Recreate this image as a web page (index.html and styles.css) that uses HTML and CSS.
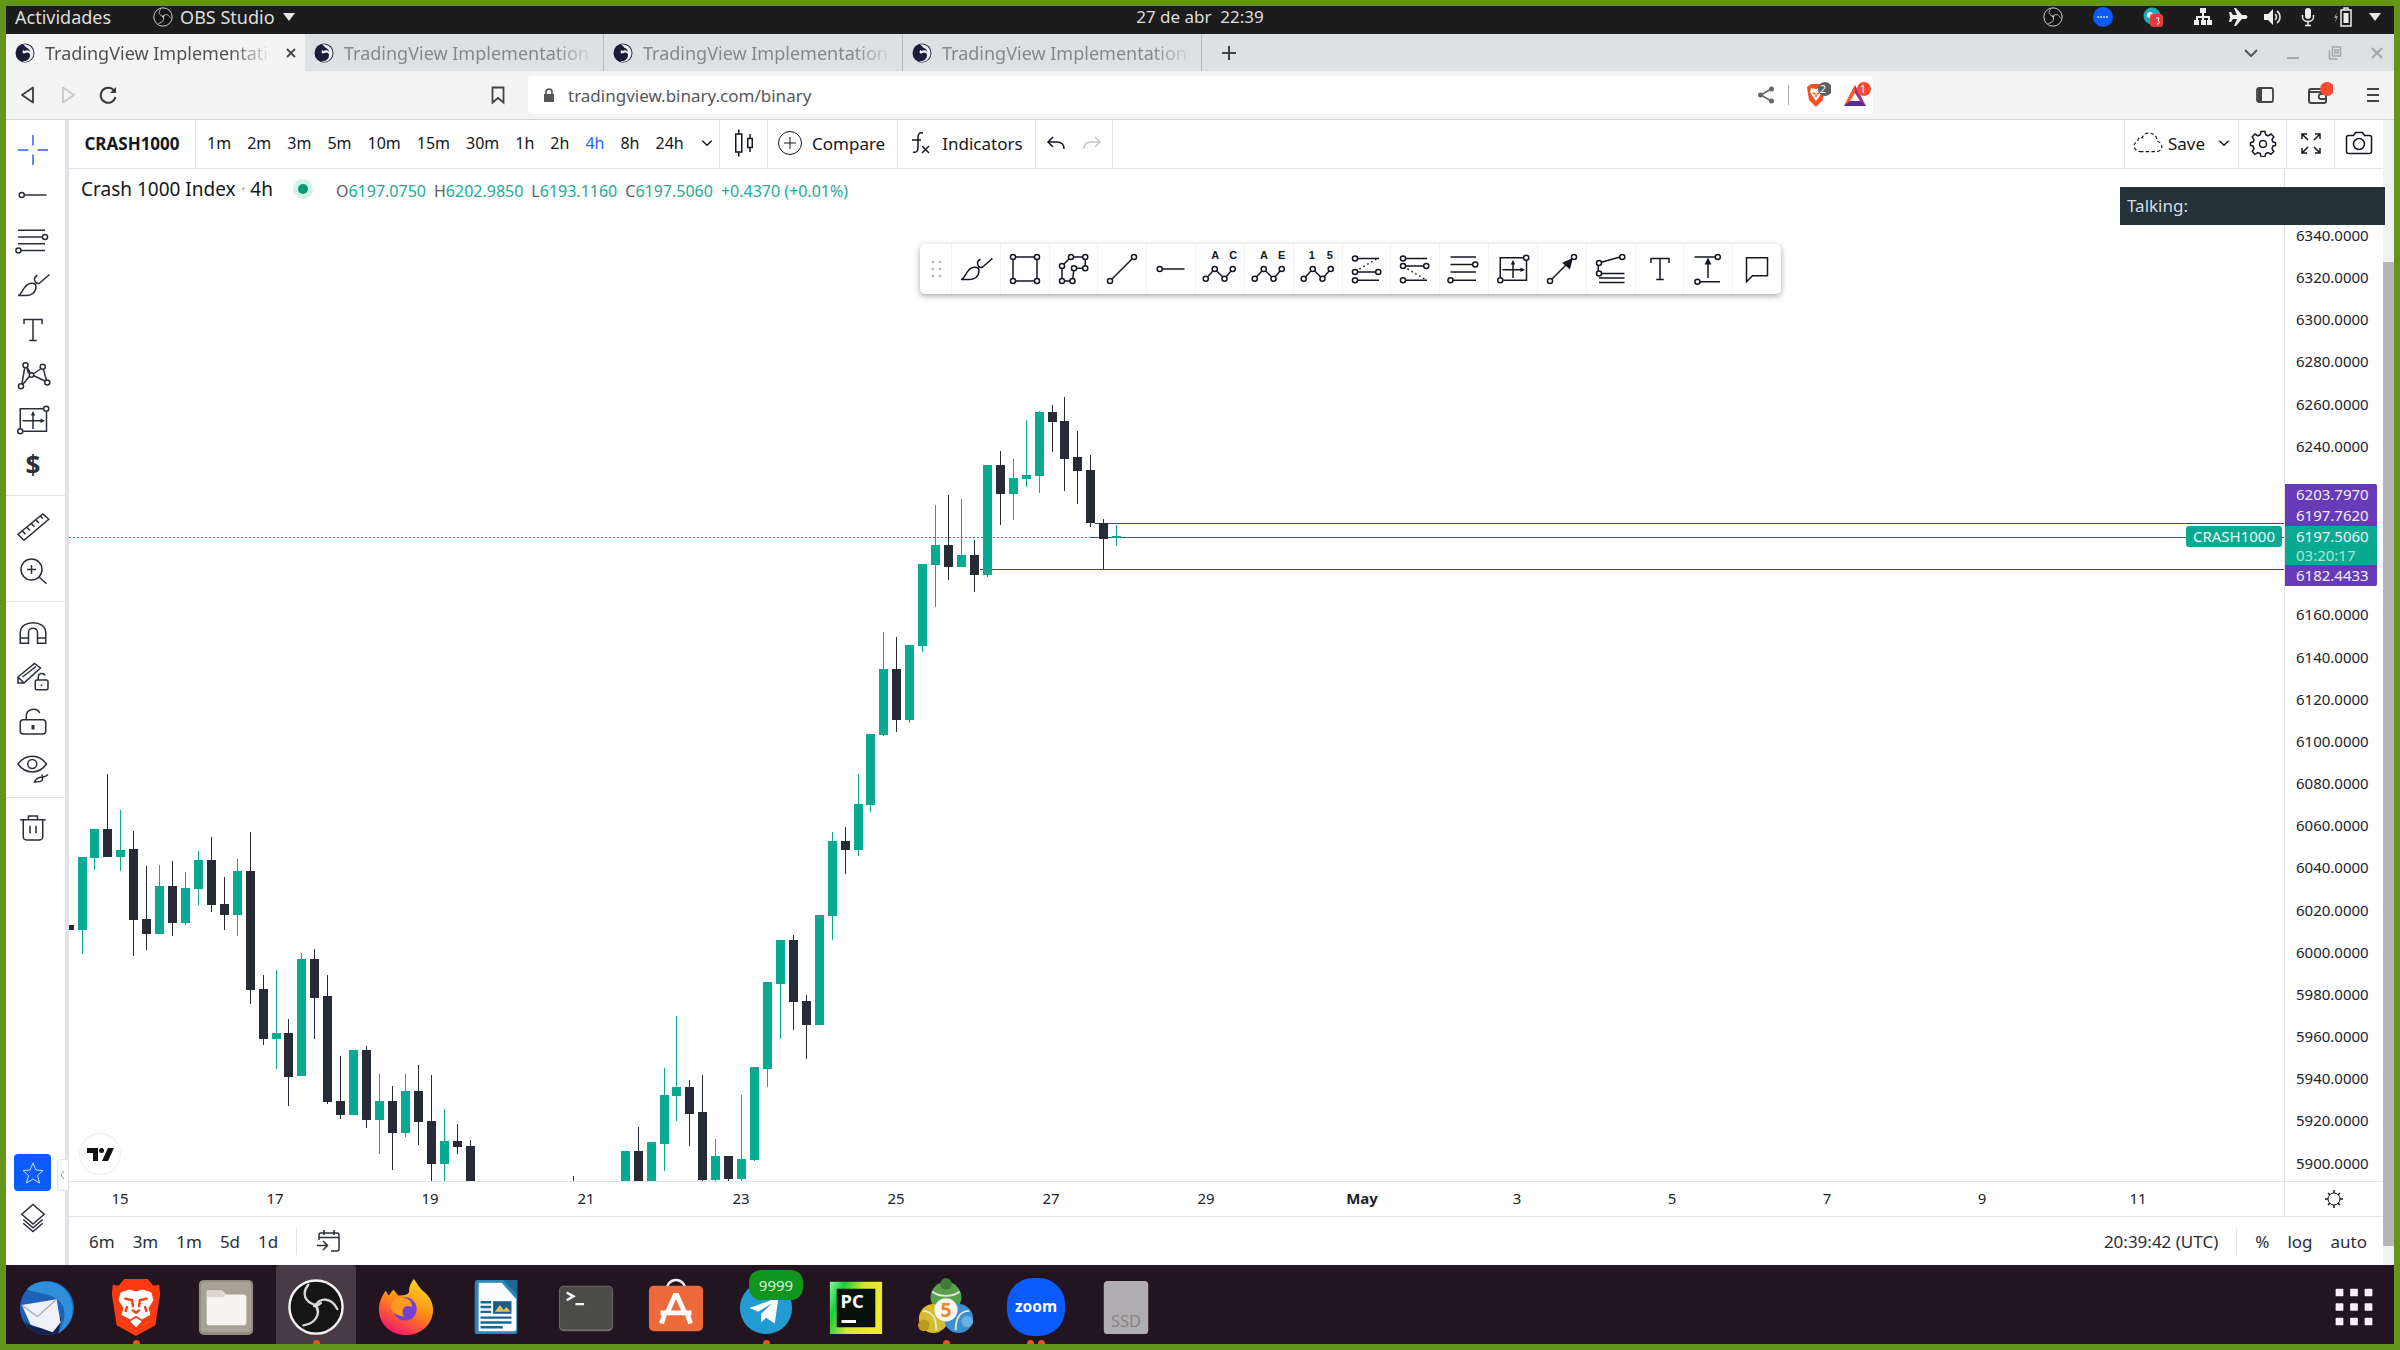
FILE: index.html
```
<!DOCTYPE html>
<html lang="es">

<head>
  <meta charset="utf-8">
  <title>TradingView Implementation</title>
  <meta name="viewport" content="width=device-width, initial-scale=1">
  <link rel="stylesheet" href="styles.css">
  <script src="chart.js" defer></script>
</head>

<body>

<!-- shared icons -->
<svg class="sprite" aria-hidden="true">
  <symbol id="i-obs" viewBox="0 0 60 60">
    <circle cx="30" cy="30" r="27.500" fill="#151515" stroke="#f4f4f4" stroke-width="2.500"/>
    <g fill="none" stroke="#d8d8dc" stroke-width="2.500" stroke-linecap="round">
      <path d="M22 7c-7 9-4 18 8 21"/>
      <path d="M30 28c4-8 16-8 22 4"/>
      <path d="M30 28c5 9 0 19-13 21"/>
      <path d="M28 29c5 0 5-2 7-3M30 27c0 4 1 5 2 7"/>
    </g>
  </symbol>
  <symbol id="i-favicon" viewBox="0 0 20 20">
    <circle cx="10" cy="10" r="9.500" fill="#1d1d3a"/>
    <path d="M8 1.500a8.800 8.800 0 1 1-1 17c5 0 8-3 8-6 0-2-1-3-3-3-1 0-2 1-3 1s-2-1-1-3c1-1 3-1 4-2-1-1-2-3-4-4z" fill="#eef0f5"/>
    <path d="M9 5c3-1 6 1 6 4-1-2-3-2-6-1z" fill="#1d1d3a"/>
  </symbol>
  <symbol id="i-chevron" viewBox="0 0 12 12"><path d="M2 4l4 4 4-4" fill="none" stroke="currentColor" stroke-width="1.200"/></symbol>
  <symbol id="i-hray" viewBox="0 0 28 28"><path d="M8.500 14H23"/><circle cx="6.500" cy="14" r="1.700"/></symbol>
  <symbol id="i-fib" viewBox="0 0 28 28"><path d="M4 7.500h18M4 12h16.500M4 16.500h18M6 21h16"/><circle cx="22" cy="12" r="1.700"/><circle cx="4.300" cy="21" r="1.700"/></symbol>
  <symbol id="i-brush" viewBox="0 0 28 28"><path d="M4 21c2 0 3-4 5-6 2-3 7-3 7 0 0 4-3 6-6 6zM15 10c0 2 1 3 3 3l7-6M15 10c0-1 1-2 2-2.500"/></symbol>
  <symbol id="i-text" viewBox="0 0 28 28"><path d="M8 10V7h12v3M14 7v14M11.500 21h5"/></symbol>
  <symbol id="i-proj" viewBox="0 0 28 28"><path d="M5.500 20V6.500h15.500M23 8.500V21.500H7.500M14 9v11M7 14.500h14"/><path d="M14 8l-1.500 3h3zM22 14.500l-3-1.500v3z" fill="currentColor" stroke="none"/><circle cx="22.800" cy="6.500" r="1.700"/><circle cx="5.500" cy="21.500" r="1.700"/></symbol>
  <symbol id="i-wave" viewBox="0 0 28 28"><path d="M4.500 20.500L10.500 14l6.500 6.500 5.500-6.500"/><circle cx="4.500" cy="20.500" r="1.700"/><circle cx="10.500" cy="14" r="1.700"/><circle cx="17" cy="20.500" r="1.700"/><circle cx="22.500" cy="14" r="1.700"/></symbol>
</svg>

<div class="desktop">

  <header class="topbar">
    <button class="topbar__item" type="button">Actividades</button>
    <button class="topbar__item topbar__app" type="button">
      <svg class="ico20"><use href="#i-obs"/></svg>
      OBS Studio
      <svg class="ico14" viewBox="0 0 14 14"><path d="M1 3h12l-6 8z" fill="#e6e6e6"/></svg>
    </button>
    <time class="topbar__clock">27 de abr&nbsp; 22:39</time>
    <div class="tray">
      <svg class="ico20 tray__wide" viewBox="0 0 20 20"><use href="#i-obs"/></svg>
      <svg class="ico20 tray__wide" viewBox="0 0 20 20"><circle cx="10" cy="10" r="10" fill="#0b5cff"/><path d="M4 10h12" stroke="#9fc0ff" stroke-width="2" stroke-dasharray="2 1"/></svg>
      <svg class="ico20 tray__wide" viewBox="0 0 20 20"><circle cx="9" cy="9" r="8.500" fill="#2ba5b8"/><circle cx="7" cy="8" r="3" fill="#d7f0f2"/><rect x="7" y="7" width="13" height="13" rx="3" fill="#e23b3b"/><path d="M13 11h3l-1 3c2 0 2 3-1 3" fill="none" stroke="#fff"/></svg>
      <svg class="ico20" viewBox="0 0 20 20"><path d="M7 1h6v5H7zM1 13h5v5H1zM8 13h5v5H8zM14 13h5v5h-5zM9 6h2v7H9zM3 9h14v4h-2v-2H5v2H3z" fill="#eee"/></svg>
      <svg class="ico20" viewBox="0 0 20 20"><path d="M1 5h2l2 3h4L6 1h2l6 7h4c2 1 2 3 0 4h-4l-6 7H6l3-7H5l-2 3H1l1-5z" fill="#eee"/></svg>
      <svg class="ico20" viewBox="0 0 20 20"><path d="M1 7h4l5-5v16l-5-5H1z" fill="#eee"/><path d="M12 7c2 2 2 4 0 6M14 4c4 3 4 9 0 12" fill="none" stroke="#ddd" stroke-width="1.600"/></svg>
      <svg class="ico20" viewBox="0 0 20 20"><rect x="7" y="1" width="6" height="11" rx="3" fill="#eee"/><path d="M4.500 8v2c0 6 11 6 11 0V8M10 15v3M7 18.500h6" fill="none" stroke="#eee" stroke-width="1.500"/></svg>
      <svg class="ico20" viewBox="0 0 20 20"><path d="M8 3h10v16H8zM11 1h4v2h-4z" fill="none" stroke="#eee" stroke-width="1.500"/><path d="M10.500 6h5v10h-5z" fill="#eee"/><path d="M4 5L1 11h2l-1 5 3-7H3z" fill="#999"/></svg>
      <svg class="ico14" viewBox="0 0 14 14"><path d="M1 3h12l-6 8z" fill="#e6e6e6"/></svg>
    </div>
  </header>

  <nav class="tabs" aria-label="Tabs">
    <div class="tab tab_active">
      <svg class="ico20"><use href="#i-favicon"/></svg>
      <a class="tab__title" href="#">TradingView Implementation</a>
      <button class="tab__close" type="button" aria-label="Close tab">
        <svg class="ico12" viewBox="0 0 12 12"><path d="M2 2l8 8M10 2l-8 8" stroke="#444" stroke-width="1.800"/></svg>
      </button>
    </div>
    <div class="tab"><svg class="ico20"><use href="#i-favicon"/></svg><a class="tab__title" href="#">TradingView Implementation</a></div>
    <div class="tab"><svg class="ico20"><use href="#i-favicon"/></svg><a class="tab__title" href="#">TradingView Implementation</a></div>
    <div class="tab"><svg class="ico20"><use href="#i-favicon"/></svg><a class="tab__title" href="#">TradingView Implementation</a></div>
    <button class="tabs__new" type="button" aria-label="New tab"><svg class="ico20" viewBox="0 0 20 20"><path d="M10 3v14M3 10h14" stroke="#444" stroke-width="2"/></svg></button>
    <div class="window-buttons">
      <button type="button" aria-label="Search tabs"><svg class="ico20" viewBox="0 0 20 20"><path d="M4 7l6 6 6-6" fill="none" stroke="#555" stroke-width="2"/></svg></button>
      <button type="button" aria-label="Minimize"><svg class="ico20" viewBox="0 0 20 20"><path d="M4 15h12" stroke="#a5a7a9" stroke-width="2"/></svg></button>
      <button type="button" aria-label="Restore"><svg class="ico20" viewBox="0 0 20 20"><path d="M7.500 4h8v9h-8zM4.500 7v9h8M10 7h3v3h-3z" fill="none" stroke="#a5a7a9" stroke-width="1.500"/></svg></button>
      <button type="button" aria-label="Close"><svg class="ico20" viewBox="0 0 20 20"><path d="M5 5l10 10M15 5L5 15" stroke="#a5a7a9" stroke-width="2.200"/></svg></button>
    </div>
  </nav>

  <div class="browser-bar">
    <div class="browser-bar__nav">
      <button type="button" aria-label="Back"><svg class="ico20" viewBox="0 0 20 20"><path d="M15 2.500v15L4 10z" fill="none" stroke="#3c3c3c" stroke-width="1.800" stroke-linejoin="round"/></svg></button>
      <button type="button" aria-label="Forward" disabled><svg class="ico20" viewBox="0 0 20 20"><path d="M5 2.500v15L16 10z" fill="none" stroke="#c6c6c6" stroke-width="1.600" stroke-linejoin="round"/></svg></button>
      <button type="button" aria-label="Reload"><svg class="ico20" viewBox="0 0 20 20"><path d="M16 5.500A7.500 7.500 0 1 0 17.500 12" fill="none" stroke="#3c3c3c" stroke-width="2"/><path d="M18 2v6h-6z" fill="#3c3c3c"/></svg></button>
    </div>
    <button class="browser-bar__bookmark" type="button" aria-label="Bookmark"><svg class="ico20" viewBox="0 0 20 20"><path d="M4.500 2.500h11v15L10 13l-5.500 4.500z" fill="none" stroke="#444" stroke-width="1.800"/></svg></button>
    <div class="address">
      <svg class="ico14" viewBox="0 0 14 14"><path d="M2 6h10v8H2z" fill="#555"/><path d="M4 7V4c0-4 6-4 6 0v3" fill="none" stroke="#555" stroke-width="1.700"/></svg>
      <input class="address__input" type="text" aria-label="Address" value="tradingview.binary.com/binary">
      <button type="button" aria-label="Share"><svg class="ico20" viewBox="0 0 20 20"><path d="M15 4L5 10l10 6" fill="none" stroke="#666" stroke-width="1.600"/><circle cx="15.500" cy="4" r="2.500" fill="#666"/><circle cx="4.500" cy="10" r="2.500" fill="#666"/><circle cx="15.500" cy="16" r="2.500" fill="#666"/></svg></button>
      <span class="address__line"></span>
      <button class="address__ext" type="button" aria-label="Brave Shields"><svg class="ico28" viewBox="0 0 28 28"><path d="M4 6l4-3h10l3 3-1 13-7 7-7-7z" fill="#f4511e"/><path d="M8 7l5 1 5-1 1 4-3 5-3 4-3-4-3-5z" fill="#fff"/><path d="M10 12l2 1M16 12l-2 1M13 13v3" stroke="#f4511e" stroke-width="1.500"/><circle cx="22" cy="8" r="7" fill="#5b5f66"/></svg><span class="address__count">2</span></button>
      <button class="address__ext" type="button" aria-label="Rewards"><svg class="ico28" viewBox="0 0 28 28"><path d="M12 4L1 25h22z" fill="#9c2f7e"/><path d="M12 4L1 25l7-5 4-8z" fill="#ff5a2b"/><path d="M1 25h22l-6-5H7z" fill="#5b2d90"/><path d="M12 12l-5 8h10z" fill="#fff"/><circle cx="21" cy="8" r="7" fill="#fa4b32"/></svg><span class="address__count">1</span></button>
    </div>
    <div class="browser-bar__right">
      <button type="button" aria-label="Sidebar"><svg class="ico20" viewBox="0 0 20 20"><rect x="2" y="3" width="16" height="14" rx="2" fill="none" stroke="#444" stroke-width="1.800"/><path d="M3 3h4v14H3z" fill="#444"/></svg></button>
      <button type="button" aria-label="Wallet"><svg class="ico28" viewBox="0 0 28 28"><rect x="4" y="8" width="17" height="14" rx="2" fill="none" stroke="#444" stroke-width="2"/><path d="M5 11h15M21 13h-5c-3 0-3 5 0 5h5" fill="none" stroke="#444" stroke-width="1.800"/><circle cx="22" cy="8" r="7" fill="#fa4b32"/></svg></button>
      <button type="button" aria-label="Menu"><svg class="ico20" viewBox="0 0 20 20"><path d="M4 4h12M4 10h12M4 16h12" stroke="#444" stroke-width="2"/></svg></button>
    </div>
  </div>

  <main class="page">

    <aside class="drawing-bar">
      <div class="drawing-bar__group">
        <button class="tool tool_active" type="button" aria-label="Cross"><svg class="ico42" viewBox="0 0 28 28"><path d="M14 4v7M14 17v7M4 14h7M17 14h7"/></svg></button>
        <button class="tool" type="button" aria-label="Horizontal ray"><svg class="ico42"><use href="#i-hray"/></svg></button>
        <button class="tool" type="button" aria-label="Fib retracement"><svg class="ico42"><use href="#i-fib"/></svg></button>
        <button class="tool" type="button" aria-label="Brush"><svg class="ico42"><use href="#i-brush"/></svg></button>
        <button class="tool" type="button" aria-label="Text"><svg class="ico42"><use href="#i-text"/></svg></button>
        <button class="tool" type="button" aria-label="XABCD pattern"><svg class="ico42" viewBox="0 0 28 28"><path d="M6.500 20.500L8.500 9M10 9l2.500 4M14.500 13l4.500-3M21 10.500l2 7M14.500 14.500l7.500 3.500M11.500 15L7 20.500M10 9.500l1 3.500"/><circle cx="9" cy="7.500" r="1.700"/><circle cx="20.500" cy="8.500" r="1.700"/><circle cx="13" cy="14" r="1.500"/><circle cx="6" cy="21.500" r="1.700"/><circle cx="23.500" cy="19" r="1.700"/></svg></button>
        <button class="tool" type="button" aria-label="Projection"><svg class="ico42"><use href="#i-proj"/></svg></button>
        <button class="tool tool_dollar" type="button" aria-label="Icons">$</button>
      </div>
      <div class="drawing-bar__group">
        <button class="tool" type="button" aria-label="Measure"><svg class="ico42" viewBox="0 0 28 28"><path d="M4 19.500L20.500 6l4 3.500L8 23.500zM7 17.500l2 2M10 15l2 2M13 12.500l2 2M16 10l2 2M19 7.500l1.500 1.500"/></svg></button>
        <button class="tool" type="button" aria-label="Zoom in"><svg class="ico42" viewBox="0 0 28 28"><circle cx="13" cy="13" r="7"/><path d="M13 10v6M10 13h6M18 18l5 4.500"/></svg></button>
      </div>
      <div class="drawing-bar__group">
        <button class="tool" type="button" aria-label="Magnet"><svg class="ico42" viewBox="0 0 28 28"><path d="M5.500 21.500v-7c0-9 17-9 17 0v7h-5.500v-7c0-4-6-4-6 0v7zM5.500 18h5.500M17 18h5.500"/></svg></button>
        <button class="tool" type="button" aria-label="Stay in drawing mode"><svg class="ico42" viewBox="0 0 28 28"><path d="M4 18v-4L15 5l4 3L8 18zM4 14l4 4M7 14l9-7"/><rect x="15.500" y="16" width="8.500" height="6.500" rx="1"/><path d="M17.500 16v-2c0-3 4-3 4.500-1M19.700 19v1"/></svg></button>
        <button class="tool" type="button" aria-label="Lock drawings"><svg class="ico42" viewBox="0 0 28 28"><rect x="5.500" y="12.500" width="17" height="9.500" rx="2"/><path d="M9.500 12.500V10c0-5 7-6 9-2"/><path d="M14 16v3" stroke-width="2"/></svg></button>
        <button class="tool" type="button" aria-label="Hide drawings"><svg class="ico42" viewBox="0 0 28 28"><path d="M4 12c5-7 14-7 19 0-5 7-14 7-19 0z"/><circle cx="13.500" cy="12" r="3"/><path d="M15 24c2-4 7-4 5-1-1 1-3 1-5 1zM20 19c0 2 2 2 4 0"/></svg></button>
      </div>
      <div class="drawing-bar__group">
        <button class="tool" type="button" aria-label="Remove"><svg class="ico42" viewBox="0 0 28 28"><path d="M5.500 8.500h17M7.500 8.500V20c0 1 1 2 2 2h9c1 0 2-1 2-2V8.500M11 8V6h6v2M12 12.500v5M16 12.500v5"/></svg></button>
      </div>
      <div class="drawing-bar__bottom">
        <button class="tool tool_star" type="button" aria-label="Favorites"><svg class="ico28" viewBox="0 0 28 28"><path d="M14 4l3 7 7 .500-5.500 5 2 7.500-6.500-4-6.500 4 2-7.500L4 11.500 11 11z" stroke="#cfe0ff"/></svg></button>
        <button class="tool" type="button" aria-label="Object tree"><svg class="ico42" viewBox="0 0 28 28"><path d="M14 5l7.500 6.500L14 18l-7.500-6.500zM7.500 15l6.500 5.500 6.500-5.500M7.500 17.500L14 23l6.500-5.500"/></svg></button>
      </div>
      <button class="collapse" type="button" aria-label="Collapse"><svg class="ico12" viewBox="0 0 12 12"><path d="M7 2L4 6l3 4" fill="none" stroke="#999"/></svg></button>
    </aside>

    <section class="workspace">

      <div class="chart-header">
        <button class="chart-header__symbol" type="button">CRASH1000</button>
        <div class="chart-header__intervals">
          <button type="button">1m</button>
          <button type="button">2m</button>
          <button type="button">3m</button>
          <button type="button">5m</button>
          <button type="button">10m</button>
          <button type="button">15m</button>
          <button type="button">30m</button>
          <button type="button">1h</button>
          <button type="button">2h</button>
          <button class="is-active" type="button">4h</button>
          <button type="button">8h</button>
          <button type="button">24h</button>
          <button class="push" type="button" aria-label="More intervals"><svg class="ico14"><use href="#i-chevron"/></svg></button>
        </div>
        <button class="chart-header__icon" type="button" aria-label="Candles"><svg class="ico42" viewBox="0 0 28 28"><path d="M8.500 8h4v12h-4zM10.500 5v3M10.500 20v3M16.500 11h3v6h-3zM18 8v3M18 17v3"/></svg></button>
        <button class="chart-header__action" type="button"><svg class="ico28" viewBox="0 0 28 28"><circle cx="14" cy="14" r="11.500"/><path d="M14 8v12M8 14h12"/></svg>Compare</button>
        <button class="chart-header__action" type="button"><svg class="ico28" viewBox="0 0 28 28"><path d="M17 4c-4-1-5 1-5 5v9c0 4-1 6-5 5M6 11h9M16 17l7 7M23 17l-7 7" stroke-width="1.500"/></svg>Indicators</button>
        <div class="chart-header__history">
          <button type="button" aria-label="Undo"><svg class="ico28" viewBox="0 0 28 28"><path d="M11 8l-5 5 5 5M6 13h9c4 0 7 2 7 7" stroke-width="1.500"/></svg></button>
          <button type="button" aria-label="Redo" disabled><svg class="ico28" viewBox="0 0 28 28"><path d="M17 8l5 5-5 5M22 13h-9c-4 0-7 2-7 7" stroke-width="1.500"/></svg></button>
        </div>
        <button class="chart-header__save" type="button"><svg class="ico32" viewBox="0 0 28 28"><path d="M7 21.500h15c6-1 5-8 0-9 0-9-12-9-13-3-3-1-4 1-4 3-5 2-4 8 2 9z" stroke-dasharray="3 2"/></svg>Save<svg class="ico14 push"><use href="#i-chevron"/></svg></button>
        <button class="chart-header__icon" type="button" aria-label="Settings"><svg class="ico28" viewBox="0 0 28 28"><path d="M12 2.500h4l.7 3.300 2.400 1 2.900-1.800 2.800 2.800-1.800 2.900 1 2.300 2.500.500v3l-2.500.500-1 2.600 1.800 2.900-2.800 2.800-2.900-1.800-2.400 1-.7 3.300h-4l-.7-3.300-2.400-1L6 25.300l-2.800-2.800L5 19.600l-1-2.600-2.500-.500v-3L4 13l1-2.300-1.800-2.900L6 5l2.900 1.800 2.400-1z" stroke-width="1.500"/><circle cx="14" cy="15" r="3.500" stroke-width="1.500"/></svg></button>
        <button class="chart-header__icon" type="button" aria-label="Fullscreen"><svg class="ico28" viewBox="0 0 28 28"><path d="M10 5H5v5M5 5l6 6M18 5h5v5M23 5l-6 6M10 24H5v-5M5 24l6-6M18 24h5v-5M23 24l-6-6" stroke-width="1.500"/></svg></button>
        <button class="chart-header__icon" type="button" aria-label="Snapshot"><svg class="ico28" viewBox="0 0 28 28"><path d="M3.500 6.500h5l2-3h7l2 3h5c1 0 2 1 2 2v14c0 1-1 2-2 2h-21c-1 0-2-1-2-2v-14c0-1 1-2 2-2z" stroke-width="1.500"/><circle cx="14" cy="15" r="5.500" stroke-width="1.500"/></svg></button>
      </div>

      <div class="chart">
        <div class="pane">
          <svg class="pane__plot" id="plot"></svg>
          <div class="legend">
            <h1 class="legend__title">Crash 1000 Index <i>·</i> 4h</h1>
            <span class="legend__dot"></span>
            <p class="legend__values">
              <span>O<b>6197.0750</b></span>
              <span>H<b>6202.9850</b></span>
              <span>L<b>6193.1160</b></span>
              <span>C<b>6197.5060</b></span>
              <b>+0.4370 (+0.01%)</b>
            </p>
          </div>
          <span class="pane__symbol">CRASH1000</span>
          <a class="tv-logo" href="#" aria-label="TradingView"><svg class="ico28" viewBox="0 0 28 28"><path d="M1 8h11v13H7v-8H1zM22 8h6l-6 13h-6z" fill="#111"/><circle cx="15.500" cy="10.500" r="2.500" fill="#111"/></svg></a>

          <div class="favorites">
            <span class="favorites__grip"><svg viewBox="0 0 12 24"><g fill="#b5b5b5" stroke="none"><circle cx="2" cy="4" r="1.300"/><circle cx="9" cy="4" r="1.300"/><circle cx="2" cy="11" r="1.300"/><circle cx="9" cy="11" r="1.300"/><circle cx="2" cy="18" r="1.300"/><circle cx="9" cy="18" r="1.300"/></g></svg></span>
            <button type="button" aria-label="Brush"><svg class="ico42"><use href="#i-brush"/></svg></button>
            <button type="button" aria-label="Rectangle"><svg class="ico42" viewBox="0 0 28 28"><path d="M7.500 6h13M7.500 22h13M6 7.500v13M22 7.500v13"/><circle cx="6" cy="6" r="1.700"/><circle cx="22" cy="6" r="1.700"/><circle cx="6" cy="22" r="1.700"/><circle cx="22" cy="22" r="1.700"/></svg></button>
            <button type="button" aria-label="Path"><svg class="ico42" viewBox="0 0 28 28"><path d="M12 6h9.500v7.500h-7.500L13 22H6V12z"/><circle cx="12" cy="6" r="1.700"/><circle cx="21.500" cy="6" r="1.700"/><circle cx="21.500" cy="13.500" r="1.700"/><circle cx="14" cy="13.500" r="1.700"/><circle cx="6" cy="12" r="1.700"/><circle cx="6" cy="22" r="1.700"/><circle cx="13" cy="22" r="1.700"/></svg></button>
            <button type="button" aria-label="Trend line"><svg class="ico42" viewBox="0 0 28 28"><path d="M7 21L21 7"/><circle cx="6" cy="22" r="1.700"/><circle cx="22" cy="6" r="1.700"/></svg></button>
            <button type="button" aria-label="Horizontal ray"><svg class="ico42"><use href="#i-hray"/></svg></button>
            <button class="wave" type="button" aria-label="Elliott correction"><svg class="ico42"><use href="#i-wave"/></svg><span>A</span><span>C</span></button>
            <button class="wave" type="button" aria-label="Elliott triangle"><svg class="ico42"><use href="#i-wave"/></svg><span>A</span><span>E</span></button>
            <button class="wave" type="button" aria-label="Elliott impulse"><svg class="ico42"><use href="#i-wave"/></svg><span>1</span><span>5</span></button>
            <button type="button" aria-label="Long position"><svg class="ico42" viewBox="0 0 28 28"><path d="M7.500 7H22M7.500 16H20M7.500 21.500H22"/><path d="M9 14l12-7" stroke-dasharray="1 2"/><circle cx="6" cy="7" r="1.700"/><circle cx="6" cy="16" r="1.700"/><circle cx="21.500" cy="16" r="1.700"/><circle cx="6" cy="21.500" r="1.700"/></svg></button>
            <button type="button" aria-label="Short position"><svg class="ico42" viewBox="0 0 28 28"><path d="M7.500 7H22M7.500 12H20M7.500 21.500H22"/><path d="M9 14l12 7" stroke-dasharray="1 2"/><circle cx="6" cy="7" r="1.700"/><circle cx="6" cy="12" r="1.700"/><circle cx="21.500" cy="12" r="1.700"/><circle cx="6" cy="21.500" r="1.700"/></svg></button>
            <button type="button" aria-label="Fib retracement"><svg class="ico42" viewBox="0 0 28 28"><path d="M5 6h17M5 11h16M5 16h17M6 21.500h16"/><circle cx="21.500" cy="11" r="1.700"/><circle cx="5" cy="21.500" r="1.700"/></svg></button>
            <button type="button" aria-label="Projection"><svg class="ico42"><use href="#i-proj"/></svg></button>
            <button type="button" aria-label="Arrow"><svg class="ico42" viewBox="0 0 28 28"><path d="M7 21L21 7"/><path d="M20.500 7.500l-1.500 6-4-3.500z" fill="currentColor"/><circle cx="6" cy="22" r="1.700"/><circle cx="22" cy="6" r="1.700"/></svg></button>
            <button type="button" aria-label="Fib extension"><svg class="ico42" viewBox="0 0 28 28"><path d="M7.500 9.500L20 6M5.500 11.500v4M7.500 17H23M6 20h17M6 23h17"/><circle cx="6" cy="10" r="1.700"/><circle cx="21.500" cy="6" r="1.700"/><circle cx="6" cy="17" r="1.700"/></svg></button>
            <button type="button" aria-label="Text"><svg class="ico42"><use href="#i-text"/></svg></button>
            <button type="button" aria-label="Price range"><svg class="ico42" viewBox="0 0 28 28"><path d="M5 6h15M8 22.500h14M14 8v12"/><path d="M14 7.500l-1.500 3h3z" fill="currentColor"/><circle cx="20.500" cy="6" r="1.700"/><circle cx="7" cy="22.500" r="1.700"/></svg></button>
            <button type="button" aria-label="Callout"><svg class="ico42" viewBox="0 0 28 28"><path d="M7 6.500h14v12H11l-4 4z"/></svg></button>
          </div>
        </div>

        <div class="price-axis">
          <svg id="prices"></svg>
          <div class="price-tags">
            <span>6203.7970</span>
            <span>6197.7620</span>
            <span class="price-tags__last">6197.5060<small>03:20:17</small></span>
            <span>6182.4433</span>
          </div>
        </div>

        <svg class="time-axis" id="times"></svg>
        <button class="axis-settings" type="button" aria-label="Scale settings"><svg class="ico20" viewBox="0 0 20 20"><circle cx="10" cy="10" r="6"/><path d="M10 1v3M10 16v3M1 10h3M16 10h3M4 4l2 2M14 14l2 2M16 4l-2 2M6 14l-2 2" stroke-width="1.500"/></svg></button>
      </div>

      <div class="chart-footer">
        <button type="button">6m</button>
        <button type="button">3m</button>
        <button type="button">1m</button>
        <button type="button">5d</button>
        <button type="button">1d</button>
        <span class="chart-footer__line"></span>
        <button type="button" aria-label="Go to date"><svg class="ico28" viewBox="0 0 28 28"><path d="M4 13V8c0-1 1-2 2-2h16c1 0 2 1 2 2v14c0 1-1 2-2 2h-6M4 10.500h20M9 3v5M19 3v5M2 18.500h10M8 14l4.500 4.500L8 23" stroke-width="1.500"/></svg></button>
        <button class="push" type="button">20:39:42 (UTC)</button>
        <span class="chart-footer__line"></span>
        <button type="button">%</button>
        <button type="button">log</button>
        <button type="button">auto</button>
      </div>
    </section>

    <div class="scrollbar"><i></i></div>
    <div class="talking">Talking:</div>
  </main>

  <nav class="dock" aria-label="Dock">
    <button type="button" aria-label="Thunderbird"><svg viewBox="0 0 60 60"><circle cx="31" cy="31" r="28" fill="#1b62b8"/><path d="M10 12C20 0 44 0 54 18c8 16 2 32-12 40 8-12 10-26 2-34-8-8-24-8-34-12z" fill="#2f8fdc"/><path d="M8 44c10 12 28 8 38-4l-3 16c-14 6-30 2-35-12z" fill="#16224e"/><path d="M5 28l36-6 4 24-8 10L14 48z" fill="#eff1f6"/><path d="M5 28l16 12 20-18" fill="none" stroke="#a9b2c2" stroke-width="1.500"/></svg></button>
    <button class="is-running" type="button" aria-label="Brave"><svg viewBox="0 0 60 60"><path d="M18 1h24l6 7 6-1 1 10-5 32-20 11-20-11L5 17 6 7l6 1z" fill="#fb3b12"/><path d="M14 15l9-3 7 2 7-2 9 3 2 8-5 8 2 7-9 5-6-4-6 4-9-5 2-7-5-8zM30 41l6 4-6 6-6-6z" fill="#fff"/><path d="M18 21l8 2 1 7M42 21l-8 2-1 7M26 33l4 3 4-3M21 29l-2 6M39 29l2 6" fill="none" stroke="#fb3b12" stroke-width="2.500"/></svg></button>
    <button type="button" aria-label="Files"><svg viewBox="0 0 60 60"><rect x="2" y="2" width="56" height="57" rx="5" fill="#8f8b7e"/><rect x="4" y="4" width="52" height="52" rx="4" fill="#a6a295"/><path d="M10 15c0-2 1-2 2-2h14l4 4h18c2 0 3 1 3 2v27c0 2-1 3-3 3H13c-2 0-3-1-3-3z" fill="#f7f3ee"/><path d="M10 20v-5c0-2 1-2 2-2h14l4 4-3 3z" fill="#ddd8cf"/></svg></button>
    <button class="is-running is-focused" type="button" aria-label="OBS Studio"><svg><use href="#i-obs"/></svg></button>
    <button type="button" aria-label="Firefox"><svg viewBox="0 0 60 60"><defs><linearGradient id="fox" x1="0.800" y1="0" x2="0.300" y2="1"><stop offset="0" stop-color="#ffe226"/><stop offset="0.500" stop-color="#ff8a16"/><stop offset="1" stop-color="#f5156c"/></linearGradient></defs><path d="M38 1c4 5 5 8 9 12 5 4 11 10 11 20 0 14-12 26-28 26S2 47 2 33c0-8 3-14 7-20l3 5 5-6 5 6c6 0 8 0 11-3 0-6 2-10 5-14z" fill="url(#fox)"/><circle cx="29" cy="32" r="12" fill="#7740d0"/><path d="M16 24c8-8 22-2 20 6-8-4-12 4-8 10-12-2-16-8-12-16z" fill="#ff9a1f"/></svg></button>
    <button type="button" aria-label="Writer"><svg viewBox="0 0 60 60"><path d="M11 2h41v53c0 2-1 3-3 3H11c-2 0-3-1-3-3V5c0-2 1-3 3-3z" fill="#2b86b5"/><path d="M12 5h24l15 17v31c0 1-1 2-2 2H12z" fill="#fafcff"/><path d="M38 2h14v16z" fill="#1d6792"/><path d="M14 25h11M14 30h11M14 35h11M14 41h32M14 46h32M14 51h23" stroke="#166694" stroke-width="2.500"/><path d="M27 24h19v13H27z" fill="#175f8a"/><path d="M29 35l5-7 4 5 3-3 4 5z" fill="#e4c44d"/></svg></button>
    <button type="button" aria-label="Terminal"><svg viewBox="0 0 60 60"><rect x="2" y="8" width="56" height="47" rx="5" fill="#6a6a68"/><rect x="3" y="9" width="54" height="44" rx="4" fill="#4b4b4a"/><path d="M10 15l7 4-7 4M19 27h9" fill="none" stroke="#f4f4f4" stroke-width="2.500"/></svg></button>
    <button type="button" aria-label="Software"><svg viewBox="0 0 60 60"><path d="M20 14c0-16 20-16 20 0" fill="none" stroke="#eee" stroke-width="2.500"/><rect x="2" y="8" width="56" height="47" rx="5" fill="#ee6a3a"/><path d="M20 38l9-20h2l9 20M14 36h32M18 38l-3 9M42 38l3 9" fill="none" stroke="#fff" stroke-width="5"/></svg></button>
    <button class="is-running" type="button" aria-label="Telegram"><svg viewBox="0 0 60 60"><circle cx="30" cy="31" r="27" fill="#229bd3"/><path d="M13 31l30-11-4 27-9-6-5 5v-9l11-11-14 9z" fill="#fff"/></svg><span class="dock__badge">9999</span></button>
    <button type="button" aria-label="PyCharm"><svg viewBox="0 0 60 60"><defs><linearGradient id="pc" x1="0" y1="0" x2="1" y2="0.400"><stop offset="0" stop-color="#8ef5a0"/><stop offset="0.250" stop-color="#16d03c"/><stop offset="0.600" stop-color="#d9e72c"/><stop offset="1" stop-color="#f4ea25"/></linearGradient></defs><path d="M3 4h54v54H3z" fill="url(#pc)"/><path d="M10 11h40v40H10z" fill="#06110a"/><path d="M15 45h15" stroke="#fff" stroke-width="3"/><text class="dock__pc" x="14" y="31">PC</text></svg></button>
    <button class="is-running" type="button" aria-label="MetaTrader 5"><svg viewBox="0 0 60 60"><circle cx="30" cy="20" r="16" fill="#57a04d"/><circle cx="17" cy="42" r="15" fill="#d6bb2f"/><circle cx="43" cy="42" r="15" fill="#3c8fd0"/><circle cx="30" cy="6" r="6" fill="#3d7c38"/><circle cx="7" cy="49" r="6" fill="#b99a20"/><circle cx="52" cy="45" r="6" fill="#66b2e4"/><path d="M16 14c6 6 22 6 28 0M6 34c8 0 14 6 14 20M54 34c-8 0-14 6-14 20" fill="none" stroke="#dfe9cf" stroke-width="2"/><circle cx="30" cy="33" r="12" fill="#fbf7f0"/><text class="dock__mt" x="30" y="40">5</text></svg></button>
    <button class="is-running is-running_two" type="button" aria-label="Zoom"><svg viewBox="0 0 60 60"><rect x="0" y="0" width="60" height="60" rx="27" fill="#0b5cff"/><text class="dock__zoom" x="30" y="35">zoom</text></svg></button>
    <button type="button" aria-label="SSD"><svg viewBox="0 0 60 60"><rect x="7" y="3" width="46" height="55" rx="4" fill="#b0aeb0"/><text class="dock__ssd" x="30" y="51">SSD</text></svg></button>
    <button class="dock__apps" type="button" aria-label="Applications"><svg viewBox="0 0 60 60"><g fill="#fbeefa"><rect x="11" y="11" width="8" height="8" rx="1"/><rect x="26" y="11" width="8" height="8" rx="1"/><rect x="41" y="11" width="8" height="8" rx="1"/><rect x="11" y="26" width="8" height="8" rx="1"/><rect x="26" y="26" width="8" height="8" rx="1"/><rect x="41" y="26" width="8" height="8" rx="1"/><rect x="11" y="41" width="8" height="8" rx="1"/><rect x="26" y="41" width="8" height="8" rx="1"/><rect x="41" y="41" width="8" height="8" rx="1"/></g></svg></button>
  </nav>
</div>

</body>

</html>
```
FILE: chart.js
```
var UP = '#08ab91';
var DOWN = '#262b36';

// bar index, high, body top, body bottom, low, up
var bars = [
  [-1, 756, 756, 761, 761, 0], [0, 688, 688, 761, 785, 1], [1, 660, 660, 689, 701, 1],
  [2, 605, 660, 688, 688, 0], [3, 641, 681, 688, 702, 1], [4, 662, 680, 751, 787, 0],
  [5, 697, 750, 765, 781, 0], [6, 696, 717, 765, 765, 1], [7, 692, 717, 754, 767, 0],
  [8, 703, 719, 754, 756, 1], [9, 682, 691, 720, 736, 1], [10, 668, 691, 736, 743, 0],
  [11, 708, 735, 746, 761, 0], [12, 690, 702, 746, 767, 1], [13, 663, 702, 821, 835, 0],
  [14, 806, 820, 870, 876, 0], [15, 801, 864, 870, 900, 1], [16, 850, 864, 908, 937, 0],
  [17, 784, 790, 907, 907, 1], [18, 780, 790, 829, 870, 0], [19, 806, 827, 933, 935, 0],
  [20, 887, 932, 946, 950, 0], [21, 881, 881, 946, 946, 1], [22, 877, 881, 951, 959, 0],
  [23, 905, 932, 951, 985, 1], [24, 917, 932, 964, 1001, 0], [25, 905, 922, 964, 968, 1],
  [26, 896, 922, 953, 976, 0], [27, 906, 952, 995, 1014, 0], [28, 940, 972, 995, 1014, 1],
  [29, 955, 972, 978, 985, 0], [30, 971, 977, 1014, 1014, 0], [38, 1007, 1014, 1020, 1020, 0],
  [42, 982, 982, 1014, 1014, 1], [43, 958, 982, 1014, 1014, 0], [44, 973, 973, 1014, 1014, 1],
  [45, 899, 926, 975, 1002, 1], [46, 847, 918, 927, 952, 1], [47, 911, 918, 945, 977, 0],
  [48, 906, 943, 1011, 1014, 0], [49, 970, 987, 1011, 1014, 1], [50, 987, 987, 1010, 1014, 0],
  [51, 926, 990, 1010, 1014, 1], [52, 898, 898, 991, 992, 1], [53, 813, 813, 900, 918, 1],
  [54, 771, 771, 815, 870, 1], [55, 766, 771, 833, 861, 0], [56, 826, 832, 856, 890, 0],
  [57, 746, 746, 856, 856, 1], [58, 663, 672, 747, 771, 1], [59, 658, 672, 681, 705, 0],
  [60, 605, 635, 681, 687, 1], [61, 565, 565, 636, 643, 1], [62, 463, 500, 566, 567, 1],
  [63, 468, 500, 551, 563, 0], [64, 476, 476, 551, 554, 1], [65, 395, 395, 477, 483, 1],
  [66, 336, 376, 396, 438, 1], [67, 326, 376, 398, 411, 0], [68, 330, 386, 398, 398, 1],
  [69, 371, 386, 406, 423, 0], [70, 296, 296, 406, 408, 1], [71, 282, 296, 325, 356, 0],
  [72, 290, 309, 325, 351, 1], [73, 251, 306, 310, 318, 1], [74, 242, 243, 307, 324, 1],
  [75, 236, 243, 253, 283, 0], [76, 228, 252, 290, 322, 0], [77, 262, 288, 302, 335, 0],
  [78, 286, 301, 354, 358, 0], [79, 350, 354, 370, 400, 0], [80, 356, 367, 369, 377, 1]
];

function add(parent, name, attrs, text) {
  var el = document.createElementNS('http://www.w3.org/2000/svg', name);
  Object.keys(attrs).forEach(function (key) {
    el.setAttribute(key, attrs[key]);
  });
  if (text) {
    el.textContent = text;
  }
  parent.appendChild(el);
}

var plot = document.getElementById('plot');

// last price and the three horizontal rays
add(plot, 'line', {x1: 0, x2: '100%', y1: 368, y2: 368, 'class': 'last-price'});
add(plot, 'line', {x1: 1026, x2: '100%', y1: 354, y2: 354, 'class': 'ray'});
add(plot, 'line', {x1: 1022, x2: '100%', y1: 368, y2: 368, 'class': 'ray ray_last'});
add(plot, 'line', {x1: 911, x2: '100%', y1: 400, y2: 400, 'class': 'ray'});

bars.forEach(function (bar) {
  var x = Math.floor(13 + bar[0] * 12.934);
  var color = bar[5] ? UP : DOWN;
  add(plot, 'rect', {x: x, y: bar[1], width: 1, height: bar[4] - bar[1], fill: color});
  add(plot, 'rect', {x: x - 4, y: bar[2], width: 9, height: bar[3] - bar[2], fill: color});
});

var prices = document.getElementById('prices');
for (var price = 6340; price >= 5900; price -= 20) {
  // these three are behind the price tags
  if (price > 6220 || price < 6180) {
    add(prices, 'text', {x: 11, y: Math.round(72 + (6340 - price) * 2.108)}, price + '.0000');
  }
}

var times = document.getElementById('times');
['15', '17', '19', '21', '23', '25', '27', '29', 'May', '3', '5', '7', '9', '11'].forEach(function (label, i) {
  add(times, 'text', {x: Math.round(51 + i * 155.2), y: 22, 'class': label === 'May' ? 'month' : 'day'}, label);
});
```
FILE: styles.css
```
* {
  box-sizing: border-box;
}

body {
  margin: 0;
  font-family: "Noto Sans", "Open Sans", sans-serif;
  font-size: 16px;
  color: #131722;
}

button {
  display: flex;
  align-items: center;
  justify-content: center;
  padding: 0;
  border: 0;
  background: none;
  color: inherit;
  font: inherit;
}

a {
  color: inherit;
  text-decoration: none;
}

svg {
  display: block;
  flex: none;
}

.sprite {
  position: absolute;
  width: 0;
  height: 0;
}

.ico12 { width: 12px; height: 12px; }
.ico14 { width: 14px; height: 14px; }
.ico20 { width: 20px; height: 20px; }
.ico28 { width: 28px; height: 28px; }
.ico32 { width: 32px; height: 32px; }
.ico42 { width: 42px; height: 42px; }

.push {
  margin-left: auto;
}

.desktop {
  display: flex;
  flex-direction: column;
  height: 100vh;
  border: 6px solid #62951a;
  overflow: hidden;
}

/* system bar */

.topbar {
  display: grid;
  grid-template-columns: auto auto 1fr;
  align-items: center;
  position: relative;
  height: 28px;
  padding: 0 12px 6px 9px;
  background: #1c1c1c;
  color: #dedede;
  font-size: 17px;
  line-height: 22px;
}

.topbar__item {
  font-size: 18px;
}

.topbar__app {
  gap: 7px;
  margin-left: 42px;
}

.topbar__clock {
  position: absolute;
  left: 0;
  right: 0;
  top: 0;
  text-align: center;
  pointer-events: none;
}

.tray {
  display: flex;
  align-items: center;
  justify-content: flex-end;
  gap: 15px;
}

.tray__wide {
  margin-right: 15px;
}

/* browser */

.tabs {
  display: flex;
  height: 37px;
  background: #dee1e3;
}

.tab {
  display: flex;
  align-items: center;
  gap: 10px;
  width: 299px;
  padding: 0 8px 0 9px;
  border-right: 1px solid #b9bcbf;
  color: #85888b;
}

.tab_active {
  padding-right: 4px;
  border-right: 0;
  background: #f4f4f5;
  color: #505254;
}

.tab__title {
  flex: 1;
  overflow: hidden;
  white-space: nowrap;
  font-size: 18px;
  mask-image: linear-gradient(to left, transparent, #000 40px);
}

.tab__close {
  width: 20px;
}

.tabs__new {
  width: 54px;
}

.window-buttons {
  display: flex;
  gap: 22px;
  margin-left: auto;
  padding-right: 7px;
}

.browser-bar {
  display: flex;
  align-items: center;
  height: 49px;
  border-bottom: 1px solid #d5d6d8;
  background: #f4f4f5;
}

.browser-bar__nav {
  display: flex;
  gap: 20px;
  padding-left: 12px;
}

.browser-bar__bookmark {
  margin-left: 370px;
}

.address {
  display: flex;
  align-items: center;
  gap: 14px;
  flex: 1;
  height: 38px;
  margin: 0 382px 0 20px;
  padding: 0 4px 0 14px;
  border-radius: 4px;
  background: #fff;
}

.address__input {
  flex: 1;
  padding: 0;
  border: 0;
  outline: 0;
  color: #55585c;
  font: inherit;
  font-size: 17px;
}

.address svg:first-child {
  margin-right: -2px;
}

.address__line {
  width: 1px;
  height: 20px;
  background: #aaa;
}

.address__ext {
  position: relative;
}

.address__count {
  position: absolute;
  top: 0;
  right: 3px;
  color: #fff;
  font-size: 11px;
  line-height: 16px;
}

.browser-bar__right {
  display: flex;
  align-items: center;
  gap: 30px;
  padding-right: 11px;
}

/* page */

.page {
  display: flex;
  flex: 1;
  min-height: 0;
  position: relative;
  background: #fff;
}

.drawing-bar {
  display: flex;
  flex-direction: column;
  position: relative;
  width: 63px;
  border-right: 4px solid #e1e3e9;
  color: #2a2e39;
}

.drawing-bar__group {
  padding: 7px 5px 8px 0;
  border-bottom: 1px solid #e1e3e9;
}

.drawing-bar__group:nth-child(4) {
  border-bottom: 0;
}

.drawing-bar__bottom {
  margin-top: auto;
  padding: 0 5px 25px 0;
}

.tool {
  width: 54px;
  height: 45px;
}

.tool svg,
.chart-header svg,
.favorites svg,
.chart-footer svg,
.axis-settings svg {
  fill: none;
  stroke: currentColor;
}

.tool_active {
  color: #2962ff;
}

.tool_dollar {
  font-size: 26px;
  font-weight: bold;
}

.tool_star {
  width: 37px;
  height: 37px;
  margin: 0 0 4px 8px;
  border-radius: 4px;
  background: #0b5cff;
}

.collapse {
  position: absolute;
  right: -4px;
  bottom: 74px;
  width: 12px;
  height: 32px;
  border: 1px solid #e1e3e9;
  border-radius: 4px 0 0 4px;
  background: #fff;
}

.workspace {
  display: flex;
  flex-direction: column;
  flex: 1;
  min-width: 0;
}

.chart-header {
  display: flex;
  height: 49px;
  border-bottom: 1px solid #e1e3e9;
  font-size: 17px;
}

.chart-header > * {
  padding-bottom: 2px;
  border-right: 1px solid #e1e3e9;
}

.chart-header__symbol {
  width: 127px;
  font-weight: bold;
}

.chart-header__intervals {
  display: flex;
  width: 524px;
  padding: 0 6px 2px 3px;
  font-size: 16px;
}

.chart-header__intervals button {
  padding: 0 8px;
}

.chart-header__intervals .push {
  padding: 0 0 0 8px;
}

.chart-header__intervals .is-active {
  color: #2962ff;
}

.chart-header__icon {
  width: 48px;
}

.chart-header__icon:last-child {
  border-right: 0;
}

.chart-header__action {
  gap: 8px;
  padding: 0 12px 2px 8px;
}

.chart-header__history {
  display: flex;
  gap: 8px;
  padding: 0 6px 2px;
}

.chart-header__history button:disabled {
  color: #c4c6cc;
}

.chart-header__save {
  gap: 4px;
  width: 115px;
  margin-left: auto;
  padding: 0 7px 2px;
  border-left: 1px solid #e1e3e9;
}

.chart {
  display: grid;
  grid-template-columns: 1fr 99px;
  grid-template-rows: 1fr 35px;
  flex: 1;
  min-height: 0;
}

.pane {
  position: relative;
  overflow: hidden;
  border-bottom: 1px solid #e1e3e9;
}

.pane__plot {
  position: absolute;
  width: 100%;
  height: 100%;
  shape-rendering: crispEdges;
}

.last-price {
  stroke: #08ab91;
  stroke-dasharray: 2 2;
}

.ray {
  stroke: #4a3b84;
}

.ray_last {
  stroke: #35597f;
}

.legend {
  display: flex;
  align-items: center;
  position: relative;
  padding: 6px 12px;
}

.legend__title {
  margin: 0;
  font-size: 19px;
  font-weight: normal;
  line-height: 28px;
}

.legend__title i {
  color: #b2b5be;
}

.legend__dot {
  width: 10px;
  height: 10px;
  margin: 0 28px 0 25px;
  border-radius: 50%;
  background: #089a72;
  box-shadow: 0 0 0 5px #d3f2ea;
}

.legend__values {
  display: flex;
  gap: 8px;
  margin: 0;
  padding-top: 3px;
  color: #5d6069;
  font-size: 16px;
}

.legend__values b {
  color: #22ab94;
  font-weight: normal;
}

.pane__symbol {
  position: absolute;
  right: 2px;
  top: 357px;
  padding: 0 7px;
  border-radius: 3px;
  background: #08ab91;
  color: #e6fff9;
  font-size: 15px;
  line-height: 21px;
}

.tv-logo {
  display: flex;
  align-items: center;
  justify-content: center;
  position: absolute;
  left: 10px;
  bottom: 6px;
  width: 42px;
  height: 42px;
  border: 1px solid #ececef;
  border-radius: 50%;
  background: #fff;
}

.favorites {
  display: flex;
  position: absolute;
  left: 851px;
  top: 75px;
  width: 861px;
  height: 50px;
  border-radius: 5px;
  background: #fff;
  box-shadow: 0 2px 6px rgba(0, 0, 0, 0.35);
}

.favorites__grip {
  width: 31px;
  padding: 14px 11px;
}

.favorites__grip svg {
  width: 12px;
  height: 24px;
}

.favorites button {
  flex: 1;
  border-left: 1px solid #f4f4f6;
}

.favorites .wave {
  position: relative;
}

.favorites .wave span {
  position: absolute;
  top: 5px;
  left: 15px;
  font-family: "Liberation Sans", sans-serif;
  font-size: 11px;
  font-weight: bold;
}

.favorites .wave span:last-child {
  left: 33px;
}

.favorites button circle,
.tool circle,
symbol circle {
  fill: #fff;
}

#i-obs circle {
  fill: #151515;
}

#i-favicon circle {
  fill: #1d1d3a;
}

.price-axis {
  position: relative;
  border-left: 1px solid #e1e3e9;
  border-bottom: 1px solid #e1e3e9;
}

.price-axis > svg {
  position: absolute;
  width: 100%;
  height: 100%;
}

.price-axis text,
.time-axis text {
  fill: #20232c;
  font-size: 15px;
}

.price-tags {
  display: flex;
  flex-direction: column;
  position: absolute;
  left: 0;
  top: 315px;
  width: 92px;
  border-radius: 0 2px 2px 0;
  overflow: hidden;
  background: #673ab7;
  color: #f3eefb;
  font-size: 15px;
  line-height: 21px;
}

.price-tags span {
  padding-left: 11px;
}

.price-tags .price-tags__last {
  height: 39px;
  background: #08ab91;
}

.price-tags small {
  display: block;
  color: #a9e6da;
  font-size: 15px;
  line-height: 16px;
}

.time-axis {
  width: 100%;
  height: 100%;
  border-bottom: 1px solid #e1e3e9;
}

.time-axis text {
  text-anchor: middle;
}

.time-axis .month {
  font-weight: bold;
}

.axis-settings {
  border-left: 1px solid #e1e3e9;
  border-bottom: 1px solid #e1e3e9;
}

.chart-footer {
  display: flex;
  align-items: center;
  gap: 18px;
  height: 48px;
  padding: 0 16px 0 20px;
  color: #2a2e39;
  font-size: 17px;
}

.chart-footer__line {
  width: 1px;
  height: 27px;
  background: #e1e3e9;
}

.scrollbar {
  width: 11px;
  padding: 142px 0 19px;
  background: #f0f1f2;
}

.scrollbar i {
  display: block;
  height: 100%;
  background: #b5b6b5;
}

.talking {
  position: absolute;
  right: 9px;
  top: 67px;
  width: 265px;
  padding: 0 7px;
  background: #26323a;
  color: #d5dde2;
  font-size: 17px;
  line-height: 38px;
}

/* dock */

.dock {
  display: flex;
  gap: 10px;
  height: 79px;
  background: #23151f;
}

.dock button {
  position: relative;
  width: 80px;
  padding-top: 4px;
}

.dock svg {
  width: 58px;
  height: 58px;
}

.dock .is-focused {
  border-radius: 4px 4px 0 0;
  background: #483b45;
}

.is-running::after {
  content: "";
  position: absolute;
  left: 37px;
  bottom: -3px;
  width: 7px;
  height: 7px;
  border-radius: 50%;
  background: #e95420;
}

.is-running_two::after {
  left: 31px;
  box-shadow: 11px 0 #e95420;
}

.dock__badge {
  position: absolute;
  left: 23px;
  top: 5px;
  width: 54px;
  border-radius: 12px;
  background: #10961f;
  color: #d8f5d8;
  font-size: 15px;
  line-height: 30px;
}

.dock__pc {
  fill: #fff;
  font-size: 19px;
  font-weight: bold;
}

.dock__mt {
  fill: #e08a2c;
  font-size: 20px;
  font-weight: bold;
  text-anchor: middle;
}

.dock__zoom {
  fill: #fff;
  font-size: 16px;
  font-weight: bold;
  text-anchor: middle;
}

.dock__ssd {
  fill: #868486;
  font-size: 17px;
  text-anchor: middle;
}

.dock .dock__apps {
  margin-left: auto;
}
```
